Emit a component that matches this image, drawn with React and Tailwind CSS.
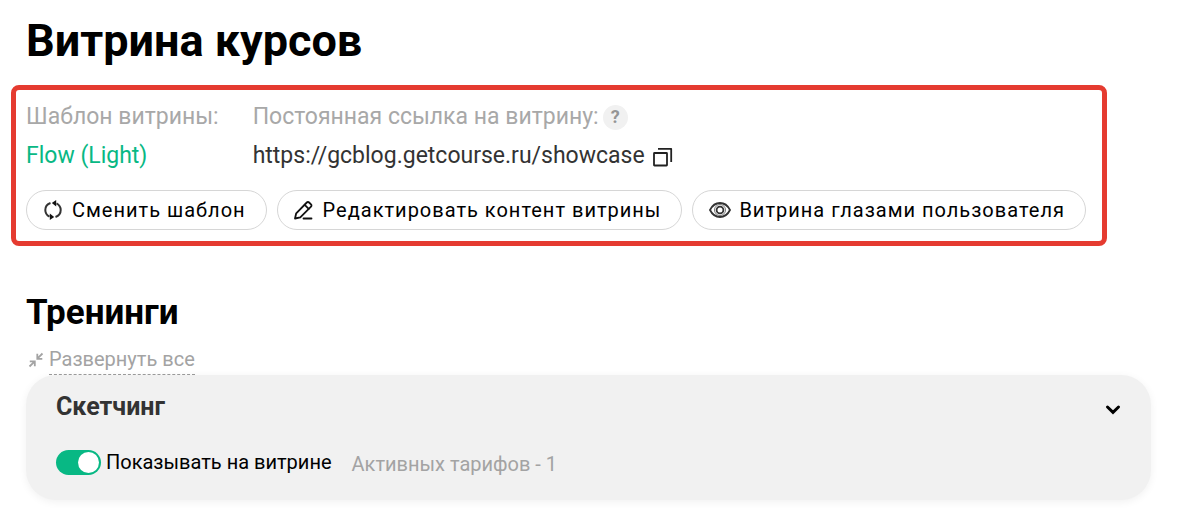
import { useState } from "react";

function CopyIcon() {
  return (
    <svg className="size-5" viewBox="0 0 20 20" fill="none" stroke="#222" strokeWidth="1.8" strokeLinejoin="round" aria-hidden="true">
      <rect x="1" y="6" width="13" height="12.5" rx="0.5" />
      <path d="M5 1.8h13.2V15" />
    </svg>
  );
}

function SwapIcon() {
  return (
    <svg className="size-5" viewBox="0 0 20 20" fill="none" stroke="#333" strokeWidth="2" aria-hidden="true">
      <path d="M7.500 3C4.200 4.200 2.300 6.800 2.300 10c0 3 1.500 5.300 4.200 6.700" />
      <path d="M12.500 17c3.300-1.200 5.200-3.800 5.200-7c0-3-1.500-5.300-4.200-6.700" />
      <path d="M8.800 3L13.200 0v6.600z" fill="#111" stroke="none" />
      <path d="M11.200 17L6.800 20v-6.600z" fill="#111" stroke="none" />
    </svg>
  );
}

function PencilIcon() {
  return (
    <svg className="size-5" viewBox="0 0 20 20" fill="none" stroke="#111" strokeWidth="1.8" strokeLinejoin="round" strokeLinecap="round" aria-hidden="true">
      <path d="M1 18.500l1.200-5.200L12.800 2.500a1.600 1.600 0 0 1 2.300 0l1.900 1.900a1.600 1.600 0 0 1 0 2.300L6.300 17.300z" />
      <path d="M10.700 4.800l4 4M9.500 18.500h8" />
    </svg>
  );
}

function EyeIcon() {
  return (
    <svg className="h-4 w-[22px]" viewBox="0 0 22 16" fill="none" stroke="#333" strokeWidth="1.8" aria-hidden="true">
      <path d="M1 8C3.300 3.400 6.800 1 11 1s7.700 2.400 10 7c-2.300 4.600-5.800 7-10 7S3.300 12.600 1 8z" />
      <circle cx="11" cy="8" r="3.400" />
      <circle cx="11" cy="8" r="5.500" stroke="#777" strokeWidth="1" />
    </svg>
  );
}

function CollapseIcon() {
  return (
    <svg className="size-4" viewBox="0 0 16 16" fill="none" stroke="#a3a3a3" strokeWidth="1.8" aria-hidden="true">
      <path d="M14.500 1.500L9.800 6.200M9.300 1.800v5h5" />
      <path d="M1.500 14.500l4.700-4.700M1.800 9.300h5v5" />
    </svg>
  );
}

function ChevronIcon() {
  return (
    <svg className="size-4" viewBox="0 0 16 16" fill="none" stroke="#000" strokeWidth="3" strokeLinecap="round" aria-hidden="true">
      <path d="M2.500 6L8 11.300L13.500 6" />
    </svg>
  );
}

function PillButton({ icon, children }) {
  return (
    <button type="button" className="flex h-10 items-center gap-2 rounded-full border border-[#d6d6d6] bg-white pr-5 pl-4 text-xl tracking-wider whitespace-nowrap text-black">
      <span className="flex min-w-[21px]">{icon}</span>
      <span>{children}</span>
    </button>
  );
}

export default function App() {
  const [shown, setShown] = useState(true);
  return (
    <main className="bg-white pt-4 pb-5 font-['Roboto',sans-serif] text-black">
      <h1 className="px-[26px] text-[45px] leading-[50px] font-bold">Витрина курсов</h1>

      <section className="mt-[19px] mr-[70px] ml-[11px] rounded-lg border-5 border-[#e53b30] px-[10px] pt-[11px] pb-[11px]">
        <div className="flex gap-[34px] text-[23px] leading-8">
          <div className="flex flex-col gap-[7px]">
            <span className="text-[#a8a8a8]">Шаблон витрины:</span>
            <a href="#template" className="text-[#08b884]">Flow (Light)</a>
          </div>
          <div className="flex flex-col gap-[7px]">
            <div className="flex items-center gap-1 text-[#a8a8a8]">
              <span>Постоянная ссылка на витрину:</span>
              <button type="button" aria-label="Подсказка" className="flex size-[25px] items-center justify-center rounded-full bg-[#f1f1f1] text-lg font-bold text-[#959595]">?</button>
            </div>
            <div className="flex items-center gap-2 text-[#333]">
              <span>https://gcblog.getcourse.ru/showcase</span>
              <button type="button" aria-label="Скопировать ссылку" className="pt-[2px]"><CopyIcon /></button>
            </div>
          </div>
        </div>
        <div className="mt-[18px] flex flex-wrap gap-[10px]">
          <PillButton icon={<SwapIcon />}>Сменить шаблон</PillButton>
          <PillButton icon={<PencilIcon />}>Редактировать контент витрины</PillButton>
          <PillButton icon={<EyeIcon />}>Витрина глазами пользователя</PillButton>
        </div>
      </section>

      <section className="mt-[45px] px-[26px]">
        <h2 className="text-[35px] leading-[44px] font-bold">Тренинги</h2>
        <button type="button" className="mt-[9px] flex items-center gap-[5px] pl-[2px] text-xl leading-[30px] text-[#a3a3a3]">
          <CollapseIcon />
          <span className="border-b border-dashed border-[#999]">Развернуть все</span>
        </button>
        <article className="rounded-[30px] bg-[#f1f1f1] px-[30px] pt-4 pb-[22px] shadow-[0_2px_8px_rgba(0,0,0,0.06)]">
          <div className="flex items-center justify-between">
            <h3 className="text-[25px] leading-8 font-bold text-[#333]">Скетчинг</h3>
            <button type="button" aria-label="Развернуть" className="pt-1"><ChevronIcon /></button>
          </div>
          <div className="mt-[23px] flex items-center gap-5 text-xl">
            <label className="flex items-center gap-[5px]">
              <input
                type="checkbox"
                checked={shown}
                onChange={(e) => setShown(e.target.checked)}
                className="flex h-[25px] w-[45px] appearance-none items-center rounded-full bg-[#bbb] p-[2px] before:size-[21px] before:rounded-full before:bg-white checked:justify-end checked:bg-[#08b884]"
              />
              <span>Показывать на витрине</span>
            </label>
            <span className="pt-1 text-[#a3a3a3]">Активных тарифов - 1</span>
          </div>
        </article>
      </section>
    </main>
  );
}
